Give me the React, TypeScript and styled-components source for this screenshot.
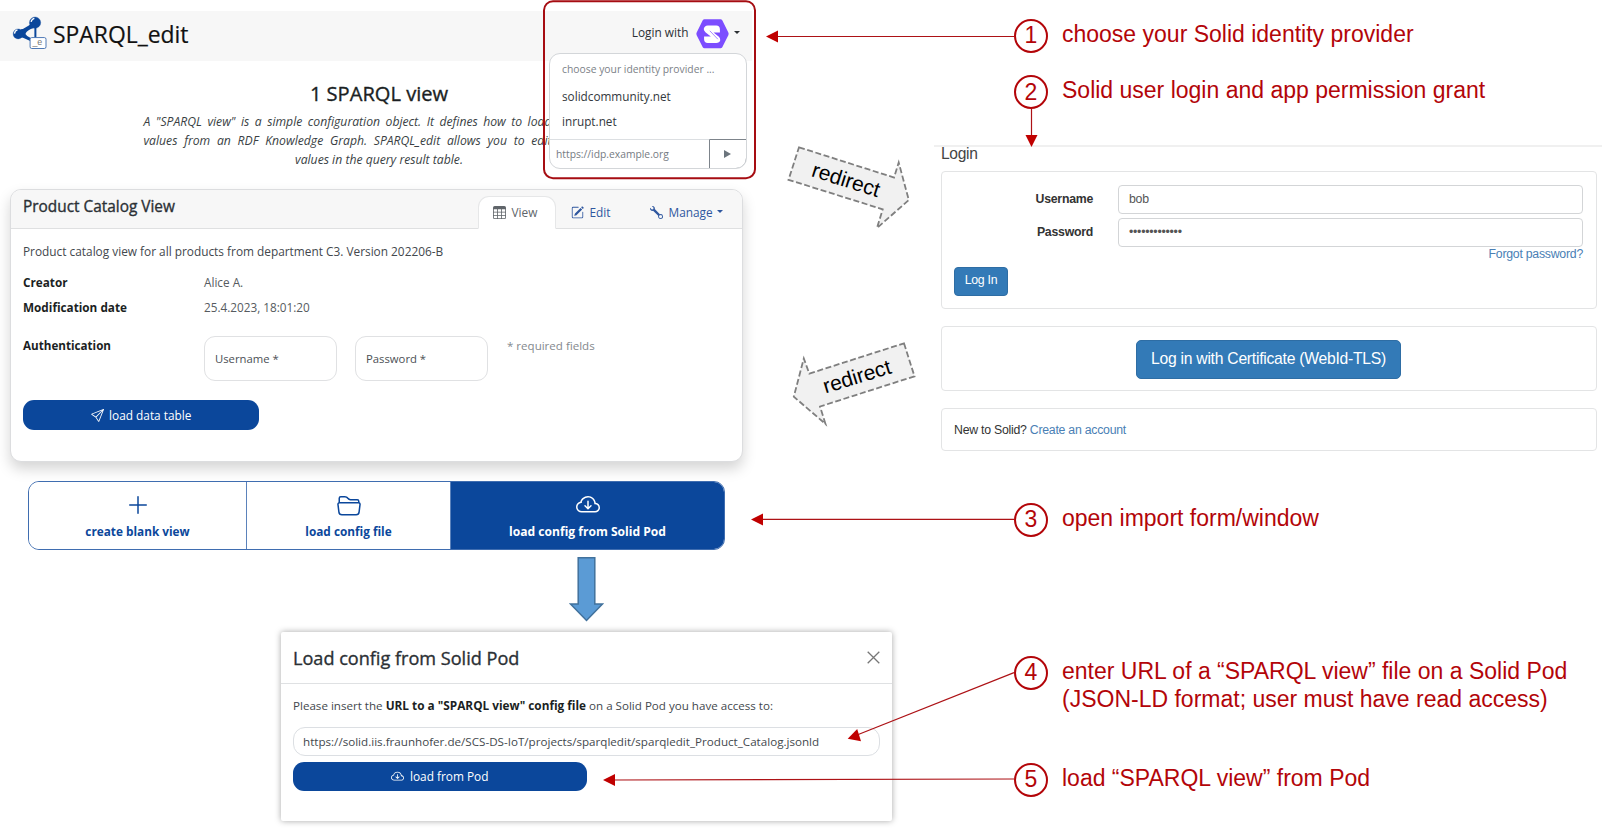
import React from 'react';
import styled, { createGlobalStyle, css } from 'styled-components';
import {
  BsTable,
  BsPencilSquare,
  BsWrench,
  BsSend,
  BsPlusLg,
  BsFolder2Open,
  BsCloudArrowDown,
} from 'react-icons/bs';

const BLUE = '#0b479b';
const RED = '#b30509';
const UI_FONT = '"Open Sans", "Noto Sans", sans-serif';
const ARIAL = '"Liberation Sans", Arial, sans-serif';

const GlobalStyle = createGlobalStyle`
  *, *::before, *::after { box-sizing: border-box; }
  body { margin: 0; background: #fff; overflow: hidden; }
  button, input { font: inherit; letter-spacing: inherit; margin: 0; }
  h1, h2, h3, p { margin: 0; }
  svg { display: block; flex: none; }
`;

/* A weight between regular and semibold for headings. */
const mediumWeight = css`
  font-weight: 400;
  -webkit-text-stroke: 0.35px currentColor;
`;

const Page = styled.main`
  position: relative;
  display: flex;
  width: 1602px;
  height: 833px;
  overflow: hidden;
  background: #fff;
`;

/* ---------- Application column ---------- */

const AppColumn = styled.section`
  width: 934px;
  flex: none;
  padding-top: 11px;
  font: 11.85px/19px ${UI_FONT};
  color: #43484d;
`;

const Header = styled.header`
  display: flex;
  align-items: center;
  width: 752px;
  height: 50px;
  padding: 0 12px 5px;
  background: #f7f7f7;
  color: #111;
`;

const Brand = styled.div`
  display: flex;
  align-items: center;
  gap: 5.5px;
  font-size: 22.9px;
  line-height: 30px;
  -webkit-text-stroke: 0.2px currentColor;
  span { padding-top: 2px; }
`;

const LoginToggle = styled.div`
  display: flex;
  align-items: center;
  margin-left: auto;
  color: #2c3034;
  span { padding-bottom: 2px; }
  svg { margin-left: 7.5px; }
`;

const Caret = styled.i`
  width: 0;
  height: 0;
  margin: -3px 0 0 5px;
  border: 3.5px solid transparent;
  border-top-color: currentColor;
  border-bottom: 0;
`;

const Intro = styled.div`
  width: 471px;
  margin: 21px 0 0 143.5px;
`;

const IntroTitle = styled.h1`
  font-size: 20.1px;
  ${mediumWeight}
  line-height: 24px;
  text-align: center;
  color: #1b1f23;
`;

const IntroText = styled.p`
  margin-top: 6px;
  font-size: 12.2px;
  font-style: italic;
  text-align: center;
  color: #3a3f44;
`;

const Justified = styled.span`
  display: block;
  width: 408px;
  text-align: justify;
  text-align-last: justify;
  white-space: nowrap;
`;

const Card = styled.article`
  width: 733px;
  height: 273px;
  margin: 20px 0 0 10px;
  border: 1px solid #dcdddf;
  border-radius: 11px;
  background: #fff;
  box-shadow: 0 7px 14px rgba(0, 0, 0, 0.17);
`;

const CardHeader = styled.div`
  display: flex;
  align-items: flex-end;
  height: 39px;
  padding: 0 4px 0 12px;
  border-bottom: 1px solid #dfe0e1;
  border-radius: 10px 10px 0 0;
  background: #f7f7f7;
`;

const CardTitle = styled.h2`
  align-self: flex-start;
  flex: 1;
  font-size: 15.4px;
  ${mediumWeight}
  line-height: 34px;
  color: #2b3035;
`;

const Tab = styled.div<{ $active?: boolean; $width: number }>`
  display: flex;
  align-items: center;
  gap: 5.5px;
  width: ${(p) => p.$width}px;
  height: 33px;
  margin-bottom: -1px;
  padding-left: 14px;
  border: 1px solid transparent;
  color: #2f579f;
  ${(p) =>
    p.$active &&
    css`
      border-color: #e6e7e8 #e6e7e8 #fff;
      border-radius: 11px 11px 0 0;
      background: #fff;
      color: #60656a;
    `}
  i { margin-left: -1px; }
`;

const CardBody = styled.div`
  padding: 10px 12px 0;
`;

const Description = styled.p`
  line-height: 24px;
  margin-bottom: 7px;
`;

const MetaRow = styled.dl`
  display: grid;
  grid-template-columns: 181px auto;
  line-height: 25px;
  margin: 0;
  dt { font-size: 11.75px; font-weight: 700; color: #1b1f23; }
  dd { margin: 0; font-size: 11.75px; color: #565b60; }
`;

const AuthRow = styled.div`
  display: flex;
  height: 45px;
  margin: 16px 0 19px;
`;

const AuthLabel = styled.strong`
  width: 181px;
  font-size: 11.65px;
  color: #1b1f23;
`;

const FloatingField = styled.label`
  display: flex;
  align-items: center;
  width: 133px;
  margin-right: 18px;
  padding-left: 10px;
  border: 1px solid #e0e1e3;
  border-radius: 11px;
  font-size: 11.3px;
  color: #4b5055;
`;

const Hint = styled.span`
  margin-left: 1px;
  font-size: 11.55px;
  color: #84898e;
`;

const PrimaryButton = styled.button<{ $width: number; $height: number }>`
  display: flex;
  align-items: center;
  justify-content: center;
  gap: 5.5px;
  width: ${(p) => p.$width}px;
  height: ${(p) => p.$height}px;
  padding: 0;
  border: 0;
  border-radius: 11px;
  background: ${BLUE};
  color: #fff;
`;

const ButtonGroup = styled.div`
  display: flex;
  width: 697px;
  height: 69px;
  margin: 19px 0 0 28px;
  border: 1px solid #3f6db0;
  border-radius: 11px;
  overflow: hidden;
`;

const GroupButton = styled.button<{ $width: number; $filled?: boolean }>`
  display: flex;
  flex-direction: column;
  align-items: center;
  gap: 5px;
  width: ${(p) => p.$width}px;
  padding: 11px 0 0;
  border: 0;
  border-right: 1px solid #5b82bb;
  background: #fff;
  color: ${BLUE};
  font-weight: 700;
  font-size: 11.8px;
  ${(p) =>
    p.$filled &&
    css`
      flex: 1;
      border: 0;
      background: ${BLUE};
      color: #fff;
      font-size: 12.1px;
    `}
`;

const DownArrow = styled.svg`
  margin: 7px 0 0 569px;
`;

const Modal = styled.section`
  width: 611px;
  height: 189px;
  margin: 10px 0 0 281px;
  border-radius: 2px;
  background: #fff;
  box-shadow: 0 0 6px rgba(0, 0, 0, 0.35);
`;

const ModalHeader = styled.div`
  display: flex;
  align-items: center;
  justify-content: space-between;
  height: 52px;
  padding: 1px 12px 0;
  border-bottom: 1px solid #dfe1e3;
  svg { margin-top: -1px; }
`;

const ModalTitle = styled.h2`
  font-size: 18.1px;
  ${mediumWeight}
  line-height: 26px;
  color: #2b3035;
`;

const ModalBody = styled.div`
  padding: 12px 12px 0;
`;

const ModalText = styled.p`
  font-size: 11.6px;
  white-space: nowrap;
  b { color: #1b1f23; font-size: 11.8px; }
`;

const UrlField = styled.div`
  height: 29px;
  margin: 12px 0 6px;
  padding-left: 9px;
  border: 1px solid #dcdfe3;
  border-radius: 12px;
  font-size: 11.63px;
  line-height: 27px;
`;

/* ---------- Provider dropdown ---------- */

const Dropdown = styled.div`
  position: absolute;
  left: 549px;
  top: 53px;
  width: 198px;
  height: 116px;
  border: 1px solid #d3d6d9;
  border-radius: 11px;
  background: #fff;
  font: 11.75px/25px ${UI_FONT};
  color: #33383d;
  display: flex;
  flex-direction: column;
  overflow: hidden;
`;

const DropdownItem = styled.div<{ $muted?: boolean }>`
  height: 25px;
  padding-left: 12px;
  ${(p) => p.$muted && css`
    height: 30px;
    padding-top: 2.5px;
    font-size: 10.35px;
    color: #7b8187;
  `}
`;

const ProviderForm = styled.div`
  display: flex;
  height: 30px;
  margin: auto -1px -1px 0;
`;

const ProviderInput = styled.div`
  flex: 1;
  padding-left: 6px;
  border-top: 1px solid #dcdfe2;
  font-size: 10.3px;
  line-height: 29px;
  color: #757b82;
`;

const ProviderGo = styled.div`
  display: flex;
  align-items: center;
  justify-content: center;
  width: 38px;
  padding-right: 1px;
  border: 1px solid #7d848b;
  border-bottom-right-radius: 11px;
`;

/* ---------- Identity provider login page ---------- */

const LoginPage = styled.section`
  flex: 1;
  margin-top: 145px;
  height: 310px;
  padding: 0 5px 0 7px;
  border-top: 2px solid #f0f0f0;
  font: 12.3px/17px ${ARIAL};
  letter-spacing: -0.25px;
  color: #333;
`;

const LoginHeading = styled.h3`
  font-size: 15.6px;
  font-weight: 400;
  line-height: 14px;
  letter-spacing: -0.3px;
  height: 24px;
  color: #444;
`;

const Panel = styled.div<{ $height: number }>`
  height: ${(p) => p.$height}px;
  margin-bottom: 17px;
  padding: 12.5px 13px 0 12px;
  border: 1px solid #e3e4e5;
  border-radius: 4px;
`;

const FormRow = styled.div`
  display: flex;
  align-items: center;
  margin-bottom: 4px;
`;

const FormLabel = styled.label`
  width: 139px;
  margin-right: 24.5px;
  text-align: right;
  font-weight: 700;
`;

const FormInput = styled.div`
  flex: 1;
  height: 29px;
  padding-left: 10.5px;
  border: 1px solid #d3d5d7;
  border-radius: 4px;
  line-height: 27px;
  color: #555;
`;

const Link = styled.a`
  color: #4a7fb5;
`;

const ForgotRow = styled.div`
  margin-top: -4.5px;
  text-align: right;
`;

const LoginButton = styled.button<{ $large?: boolean }>`
  display: block;
  width: 54px;
  height: 29px;
  margin-top: 4px;
  padding: 0 0 2px;
  border: 1px solid #2e6da4;
  border-radius: 4px;
  background: #337ab7;
  color: #fff;
  ${(p) => p.$large && css`
    width: 265px;
    height: 39px;
    margin: 0 auto;
    border-radius: 5px;
    font-size: 15.7px;
  `}
`;

/* ---------- Annotations over the canvas ---------- */

const Overlay = styled.svg`
  position: absolute;
  inset: 0;
  pointer-events: none;
`;

const Callout = styled.div<{ $top: number }>`
  position: absolute;
  left: 1014px;
  top: ${(p) => p.$top}px;
  display: flex;
  gap: 14px;
  font: 23px/28px ${ARIAL};
  color: ${RED};
  white-space: nowrap;
`;

const Step = styled.span`
  display: flex;
  align-items: center;
  justify-content: center;
  width: 34px;
  height: 34px;
  padding-bottom: 1px;
  border: 2px solid ${RED};
  border-radius: 50%;
`;

const CalloutText = styled.p`
  padding-top: 1px;
`;

const BrandMark = () => (
  <svg width="35.5" height="34.5" viewBox="36 50 106 104">
    <g fill={BLUE} stroke={BLUE}>
      <path d="M60 98 L98 76" strokeWidth="7" />
      <path d="M106 76 L106 118" strokeWidth="6" />
      <path d="M60 108 L92 122" strokeWidth="7" />
      <path d="M62 90 Q82 90 90 76 L102 86 Q80 92 76 104 Q80 112 92 116 L90 124 Q74 112 62 114Z" stroke="none" />
      <circle cx="105" cy="70" r="17" />
      <circle cx="54" cy="104" r="15" />
    </g>
    <path d="M93 68 q2 -9 10 -11" fill="none" stroke="#fff" strokeWidth="4" />
    <path d="M43 103 q1 -9 9 -11" fill="none" stroke="#fff" strokeWidth="4" />
    <rect x="90" y="115" width="48" height="33" rx="5" fill="#fff" stroke="#4f79b5" strokeWidth="3" />
    <text x="97" y="138" fontFamily="Liberation Sans, sans-serif" fontSize="27" fill="#777">_e</text>
  </svg>
);

const SolidMark = () => (
  <svg width="33" height="30" viewBox="948 57 98 89">
    <path d="M973 58 H1021 Q1024 58 1026 61 L1044 97 Q1046 101 1044 105 L1026 141 Q1024 144 1021 144 H973 Q970 144 968 141 L950 105 Q948 101 950 97 L968 61 Q970 58 973 58Z" fill="#7c4dff" />
    <path d="M983 76 H1008 Q1019 76 1019 88 V97 H1000 L1016 110 Q1020 114 1020 120 Q1018 128 1008 128 H983 Q972 128 972 117 V109 H992 L976 96 Q971 92 971 87 Q973 76 983 76Z" fill="#fff" />
    <path d="M989 92 L1013 117" stroke="#7c4dff" strokeWidth="2" />
  </svg>
);

const Steps = [
  { n: 1, top: 18.5, lines: ['choose your Solid identity provider'] },
  { n: 2, top: 75, lines: ['Solid user login and app permission grant'] },
  { n: 3, top: 502.5, lines: ['open import form/window'] },
  { n: 4, top: 655.5, lines: ['enter URL of a “SPARQL view” file on a Solid Pod', '(JSON-LD format; user must have read access)'] },
  { n: 5, top: 762.5, lines: ['load “SPARQL view” from Pod'] },
];

export default function App() {
  return (
    <Page>
      <GlobalStyle />
      <AppColumn>
        <Header>
          <Brand>
            <BrandMark />
            <span>SPARQL_edit</span>
          </Brand>
          <LoginToggle>
            <span>Login with</span>
            <SolidMark />
            <Caret />
          </LoginToggle>
        </Header>
        <Intro>
          <IntroTitle>1 SPARQL view</IntroTitle>
          <IntroText>
            <Justified>A "SPARQL view" is a simple configuration object. It defines how to load</Justified>
            <Justified>values from an RDF Knowledge Graph. SPARQL_edit allows you to edit</Justified>
            values in the query result table.
          </IntroText>
        </Intro>
        <Card>
          <CardHeader>
            <CardTitle>Product Catalog View</CardTitle>
            <Tab $active $width={78}><BsTable size={13} />View</Tab>
            <Tab $width={79}><BsPencilSquare size={13} />Edit</Tab>
            <Tab $width={103}><BsWrench size={13} />Manage<Caret /></Tab>
          </CardHeader>
          <CardBody>
            <Description>Product catalog view for all products from department C3. Version 202206-B</Description>
            <MetaRow><dt>Creator</dt><dd>Alice A.</dd></MetaRow>
            <MetaRow><dt>Modification date</dt><dd>25.4.2023, 18:01:20</dd></MetaRow>
            <AuthRow>
              <AuthLabel>Authentication</AuthLabel>
              <FloatingField>Username *</FloatingField>
              <FloatingField>Password *</FloatingField>
              <Hint>* required fields</Hint>
            </AuthRow>
            <PrimaryButton $width={236} $height={30}><BsSend size={13} />load data table</PrimaryButton>
          </CardBody>
        </Card>
        <ButtonGroup>
          <GroupButton $width={218}><BsPlusLg size={24} />create blank view</GroupButton>
          <GroupButton $width={204}><BsFolder2Open size={24} />load config file</GroupButton>
          <GroupButton $width={274} $filled><BsCloudArrowDown size={24} />load config from Solid Pod</GroupButton>
        </ButtonGroup>
        <DownArrow width="35" height="65" viewBox="0 0 35 65">
          <path d="M9.2 0.8 H25.8 V47 H33.5 L17.5 63.5 L1.5 47 H9.2Z" fill="#5b9bd5" stroke="#41719c" strokeWidth="1.5" />
        </DownArrow>
        <Modal>
          <ModalHeader>
            <ModalTitle>Load config from Solid Pod</ModalTitle>
            <svg width="13" height="13" viewBox="0 0 13 13">
              <path d="M0.7 0.7 L12.3 12.3 M12.3 0.7 L0.7 12.3" stroke="#777" strokeWidth="1.3" />
            </svg>
          </ModalHeader>
          <ModalBody>
            <ModalText>
              Please insert the <b>URL to a "SPARQL view" config file</b> on a Solid Pod you have access to:
            </ModalText>
            <UrlField>https://solid.iis.fraunhofer.de/SCS-DS-IoT/projects/sparqledit/sparqledit_Product_Catalog.jsonld</UrlField>
            <PrimaryButton $width={294} $height={29}><BsCloudArrowDown size={13} />load from Pod</PrimaryButton>
          </ModalBody>
        </Modal>
      </AppColumn>

      <LoginPage>
        <LoginHeading>Login</LoginHeading>
        <Panel $height={138}>
          <FormRow><FormLabel>Username</FormLabel><FormInput>bob</FormInput></FormRow>
          <FormRow><FormLabel>Password</FormLabel><FormInput>•••••••••••••</FormInput></FormRow>
          <ForgotRow><Link>Forgot password?</Link></ForgotRow>
          <LoginButton>Log In</LoginButton>
        </Panel>
        <Panel $height={65}>
          <LoginButton $large>Log in with Certificate (WebId-TLS)</LoginButton>
        </Panel>
        <Panel $height={43}>
          New to Solid? <Link>Create an account</Link>
        </Panel>
      </LoginPage>

      <Dropdown>
        <DropdownItem $muted>choose your identity provider ...</DropdownItem>
        <DropdownItem>solidcommunity.net</DropdownItem>
        <DropdownItem>inrupt.net</DropdownItem>
        <ProviderForm>
          <ProviderInput>https://idp.example.org</ProviderInput>
          <ProviderGo>
            <svg width="7" height="8" viewBox="0 0 7 8"><path d="M0 0 L7 4 L0 8Z" fill="#6c757d" /></svg>
          </ProviderGo>
        </ProviderForm>
      </Dropdown>

      <Overlay width="1602" height="833" viewBox="0 0 1602 833">
        <rect x="544" y="1.2" width="211" height="177" rx="9" fill="none" stroke="#a60d12" strokeWidth="2" />
        <g stroke="#ad1216" strokeWidth="1.2" fill="none">
          <path d="M777 36.5 H1014" />
          <path d="M1031.5 109 V136" />
          <path d="M762 519.4 H1014" />
          <path d="M857 735 L1014 672.6" />
          <path d="M614 780 L1014 779" />
        </g>
        <g fill="#c00000">
          <path d="M766 36.5 L778 30.5 V42.5Z" />
          <path d="M1031.5 147 L1025.5 135 H1037.5Z" />
          <path d="M751 519.4 L763 513.4 V525.4Z" />
          <path d="M847.7 738.8 L857.2 729 L861 741.2Z" />
          <path d="M603 780 L615 774 V786Z" />
        </g>
        <g fill="#f1f1f1" stroke="#7f7f7f" strokeWidth="1.8" strokeDasharray="6 2.6">
          <path d="M799 147.3 L894 177.5 L898.7 162.5 L908.8 200 L877 228 L882.7 209.3 L788.5 179.8Z" />
          <path d="M904 343.3 L914.5 376.3 L820 406.5 L825.5 424 L793.8 396.7 L803.8 358.5 L809.3 373.6Z" />
        </g>
        <g fontFamily="Liberation Sans, sans-serif" fontSize="21" fill="#000">
          <text transform="translate(810.5 176) rotate(17.6)">redirect</text>
          <text transform="translate(825.5 393.5) rotate(-17)">redirect</text>
        </g>
      </Overlay>

      {Steps.map((s) => (
        <Callout key={s.n} $top={s.top}>
          <Step>{s.n}</Step>
          <CalloutText>
            {s.lines.map((line, i) => (
              <React.Fragment key={line}>
                {i > 0 && <br />}
                {line}
              </React.Fragment>
            ))}
          </CalloutText>
        </Callout>
      ))}
    </Page>
  );
}
